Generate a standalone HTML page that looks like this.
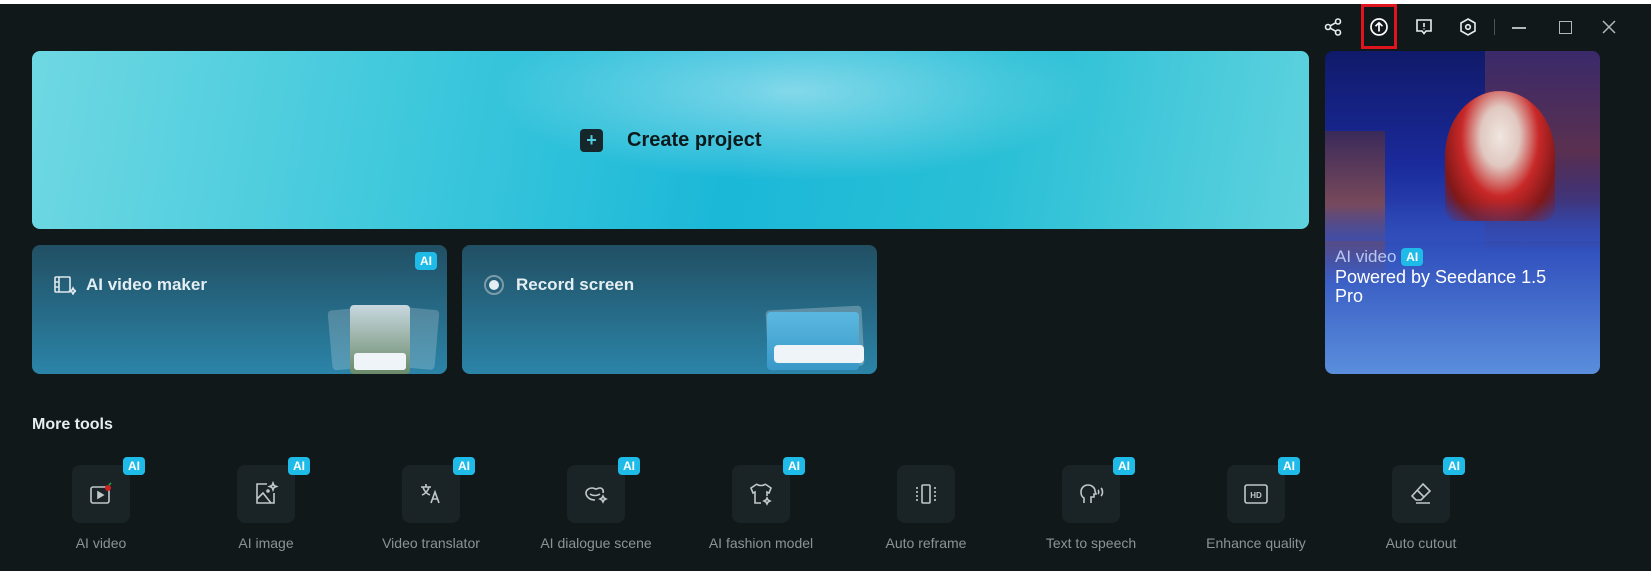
<!DOCTYPE html>
<html><head><meta charset="utf-8"><style>
*{margin:0;padding:0;box-sizing:border-box}
body{width:1651px;height:571px;background:#111819;font-family:"Liberation Sans",sans-serif;position:relative;overflow:hidden;color:#e6eef0}
.top{position:absolute;left:0;top:0;width:1651px;height:4px;background:#fff}
.ic{position:absolute;top:17px;width:20px;height:20px}
.create{position:absolute;left:32px;top:51px;width:1277px;height:178px;border-radius:8px;background:linear-gradient(100deg,#6fd8e2 0%,#3ec8dc 30%,#1bb8d8 55%,#29bfd6 75%,#5fd2de 100%);}
.create .glow{position:absolute;left:0;top:0;right:0;bottom:0;border-radius:8px;background:radial-gradient(ellipse 300px 90px at 760px 40px,rgba(255,255,255,.45),rgba(255,255,255,0))}
.create .t{position:absolute;left:548px;top:78px;font-size:20px;font-weight:bold;color:#0d1a1c;display:flex;align-items:center}
.plus{width:23px;height:23px;background:#16272b;border-radius:4px;color:#4fd0e0;font-size:18px;line-height:22px;text-align:center;margin-right:24px;font-weight:bold}
.card{position:absolute;top:245px;width:415px;height:129px;border-radius:8px;background:linear-gradient(180deg,#214f63,#2b84a8)}
.card .t{position:absolute;left:22px;top:30px;font-size:17px;font-weight:bold;color:#e4eef2;display:flex;align-items:center}
.ai{background:#1fbbe8;color:#fff;font-size:12px;font-weight:bold;border-radius:4px;padding:2px 5px;line-height:14px}
.banner{position:absolute;left:1325px;top:51px;width:275px;height:323px;border-radius:8px;overflow:hidden;background:linear-gradient(180deg,#101a6a 0%,#1a2a9a 35%,#3556c0 65%,#5a8edc 100%)}
.more{position:absolute;left:32px;top:416px;font-size:16px;font-weight:bold;color:#e8eef0}
.tool{position:absolute;top:465px;width:58px;height:58px;border-radius:8px;background:#1a2325}
.tool .ai{position:absolute;right:-15px;top:-8px}
.lbl{position:absolute;top:535px;width:160px;text-align:center;font-size:14px;color:#8a9496}
</style></head><body>
<div class="top"></div>
<svg class="ic" style="left:1323px" viewBox="0 0 20 20" fill="none" stroke="#e8eef0" stroke-width="1.6"><circle cx="5" cy="10" r="2.5"/><circle cx="15" cy="4.5" r="2.5"/><circle cx="15" cy="15.5" r="2.5"/><path d="M7.2 8.8l5.6-3.1M7.2 11.2l5.6 3.1"/></svg>
<div style="position:absolute;left:1361px;top:4px;width:36px;height:45px;border:3px solid #e0141c"></div>
<svg class="ic" style="left:1369px" viewBox="0 0 20 20" fill="none" stroke="#fff" stroke-width="1.7"><circle cx="10" cy="10" r="8"/><path d="M10 14.5V6M6.5 9.2L10 5.8l3.5 3.4"/></svg>
<svg class="ic" style="left:1414px" viewBox="0 0 20 20" fill="none" stroke="#e8eef0" stroke-width="1.6"><path d="M3 3h14v11h-5l-2 2.5L8 14H3z"/><path d="M10 6v4M10 11.5v1"/></svg>
<svg class="ic" style="left:1458px" viewBox="0 0 20 20" fill="none" stroke="#e8eef0" stroke-width="1.6"><path d="M10 2l7 4v8l-7 4-7-4V6z"/><circle cx="10" cy="10" r="2.3"/></svg>
<div style="position:absolute;left:1494px;top:19px;width:1px;height:16px;background:#4a5456"></div>
<div style="position:absolute;left:1512px;top:27px;width:14px;height:1.5px;background:#b0b8ba"></div>
<div style="position:absolute;left:1559px;top:21px;width:13px;height:13px;border:1.5px solid #b0b8ba"></div>
<svg class="ic" style="left:1599px" viewBox="0 0 20 20" stroke="#b0b8ba" stroke-width="1.5"><path d="M4 4l12 12M16 4L4 16"/></svg>

<div class="create"><div class="glow"></div><div class="t"><div class="plus">+</div>Create project</div></div>

<div class="card" style="left:32px"><span class="ai" style="position:absolute;right:10px;top:7px">AI</span>
<div class="t"><svg width="22" height="20" viewBox="0 0 22 20" fill="none" stroke="#dfe8ec" stroke-width="1.6" style="margin-right:10px"><rect x="1" y="2" width="15" height="15" rx="1"/><path d="M5 2v15M1 7h4M1 12h4M19 13l1 2 2 1-2 1-1 2-1-2-2-1 2-1z"/></svg>AI video maker</div>
<div style="position:absolute;left:298px;top:63px;width:60px;height:60px;background:rgba(255,255,255,.2);border-radius:4px;transform:rotate(-5deg)"></div>
<div style="position:absolute;left:355px;top:63px;width:50px;height:60px;background:rgba(255,255,255,.2);border-radius:4px;transform:rotate(5deg)"></div>
<div style="position:absolute;left:318px;top:60px;width:60px;height:69px;background:linear-gradient(180deg,#c8d8e0,#6a8a6a);border-radius:4px"></div>
<div style="position:absolute;left:322px;top:108px;width:52px;height:17px;background:#eef4f8;border-radius:3px"></div></div>

<div class="card" style="left:462px">
<div class="t"><span style="width:20px;height:20px;border-radius:50%;border:2px solid #7d9aa8;display:inline-flex;align-items:center;justify-content:center;margin-right:12px"><span style="width:10px;height:10px;border-radius:50%;background:#e4eef2"></span></span>Record screen</div>
<div style="position:absolute;left:305px;top:63px;width:96px;height:60px;background:rgba(255,255,255,.25);border-radius:4px;transform:rotate(-3deg)"></div>
<div style="position:absolute;left:305px;top:67px;width:92px;height:58px;background:linear-gradient(180deg,#5ab8e0,#3a98c8);border-radius:4px"></div>
<div style="position:absolute;left:312px;top:100px;width:90px;height:18px;background:#eef4f8;border-radius:4px"></div></div>

<div class="banner">
<div style="position:absolute;left:160px;top:0;width:115px;height:200px;background:linear-gradient(180deg,#3a2a6a,#5a3050 50%,rgba(60,60,150,0))"></div>
<div style="position:absolute;left:0;top:80px;width:60px;height:150px;background:linear-gradient(180deg,#3a2a5a,#7a4a5a 50%,rgba(60,90,180,0))"></div>
<div style="position:absolute;left:120px;top:40px;width:110px;height:130px;border-radius:50% 50% 10% 10%;background:radial-gradient(ellipse at 50% 35%,#f0e6e0 0%,#e0c8c0 25%,#c82828 50%,#801818 75%,rgba(80,20,60,0) 100%)"></div>
<div style="position:absolute;left:0;top:150px;width:275px;height:40px;background:linear-gradient(180deg,rgba(40,60,170,0),rgba(50,80,190,.6))"></div>
<div style="position:absolute;left:10px;top:196px;font-size:17px;color:#b8c8f0;display:flex;align-items:center">AI video&nbsp;<span class="ai">AI</span></div>
<div style="position:absolute;left:10px;top:217px;font-size:18px;color:#fff;line-height:19px">Powered by Seedance 1.5<br>Pro</div></div>

<div class="more">More tools</div>

<div class="tool" style="left:72px"><span class="ai">AI</span><svg style="position:absolute;left:17px;top:17px" width="26" height="26" viewBox="0 0 26 26" fill="none" stroke="#c0c8ca" stroke-width="1.6"><rect x="2" y="5" width="18" height="16" rx="2"/><path d="M9 10v6l5-3z" fill="#c0c8ca"/><circle cx="19" cy="6" r="3" fill="#d02020" stroke="none"/><path d="M20 3l2-2" stroke="#20a040"/></svg></div>
<div class="tool" style="left:237px"><span class="ai">AI</span><svg style="position:absolute;left:16px;top:16px" width="26" height="26" viewBox="0 0 26 26" fill="none" stroke="#c0c8ca" stroke-width="1.6"><path d="M14 3H4v19h17V12"/><path d="M4 18l6-6 8 10"/><circle cx="15" cy="10" r="1"/><path d="M20 2l1 2.5 2.5 1-2.5 1-1 2.5-1-2.5-2.5-1 2.5-1z"/></svg></div>
<div class="tool" style="left:402px"><span class="ai">AI</span><svg style="position:absolute;left:16px;top:16px" width="26" height="26" viewBox="0 0 26 26" fill="none" stroke="#c0c8ca" stroke-width="1.6"><path d="M3 6h10M8 3v3M5 6c1 4 4 7 7 8M11 6c-1 4-4 7-7 8M13 22l4-11 4 11M14.5 18h5"/></svg></div>
<div class="tool" style="left:567px"><span class="ai">AI</span><svg style="position:absolute;left:16px;top:16px" width="26" height="26" viewBox="0 0 26 26" fill="none" stroke="#c0c8ca" stroke-width="1.6"><path d="M20 12c1-3-1-5-3-5-2 0-3 1-4 1s-2-1-4-1C6 7 3 9 3 12c0 3 3 7 9 7M7 13c3 2 7 2 10 0M20 15l1 2 2 1-2 1-1 2-1-2-2-1 2-1z"/></svg></div>
<div class="tool" style="left:732px"><span class="ai">AI</span><svg style="position:absolute;left:16px;top:16px" width="26" height="26" viewBox="0 0 26 26" fill="none" stroke="#c0c8ca" stroke-width="1.6"><path d="M9 3l-6 4 2 5 2-1v11h6M17 3l6 4-2 5-2-1v4M9 3c1 2 7 2 8 0M19 17l1 2 2 1-2 1-1 2-1-2-2-1 2-1z"/></svg></div>
<div class="tool" style="left:897px"><svg style="position:absolute;left:16px;top:16px" width="26" height="26" viewBox="0 0 26 26" fill="none" stroke="#c0c8ca" stroke-width="1.6"><rect x="9" y="4" width="8" height="18" rx="1"/><path d="M4 6v14M22 6v14" stroke-dasharray="2 2"/></svg></div>
<div class="tool" style="left:1062px"><span class="ai">AI</span><svg style="position:absolute;left:16px;top:16px" width="26" height="26" viewBox="0 0 26 26" fill="none" stroke="#c0c8ca" stroke-width="1.6"><path d="M6 22v-5c-2-1-3-3-3-6 0-4 3-7 7-7s7 3 7 6l1 3h-2v3h-3v6M20 9c1 1 1 3 0 4M23 7c2 2 2 6 0 8"/></svg></div>
<div class="tool" style="left:1227px"><span class="ai">AI</span><svg style="position:absolute;left:15px;top:16px" width="28" height="26" viewBox="0 0 28 26" fill="none" stroke="#c0c8ca" stroke-width="1.6"><rect x="3" y="4" width="22" height="18" rx="2"/><text x="14" y="17" font-size="8" font-weight="bold" fill="#c0c8ca" stroke="none" text-anchor="middle" font-family="Liberation Sans">HD</text></svg></div>
<div class="tool" style="left:1392px"><span class="ai">AI</span><svg style="position:absolute;left:16px;top:16px" width="26" height="26" viewBox="0 0 26 26" fill="none" stroke="#c0c8ca" stroke-width="1.6"><path d="M15 3l7 7-9 9H8l-4-4zM9 9l7 7M8 22h14"/></svg></div>

<div class="lbl" style="left:21px">AI video</div>
<div class="lbl" style="left:186px">AI image</div>
<div class="lbl" style="left:351px">Video translator</div>
<div class="lbl" style="left:516px">AI dialogue scene</div>
<div class="lbl" style="left:681px">AI fashion model</div>
<div class="lbl" style="left:846px">Auto reframe</div>
<div class="lbl" style="left:1011px">Text to speech</div>
<div class="lbl" style="left:1176px">Enhance quality</div>
<div class="lbl" style="left:1341px">Auto cutout</div>
</body></html>
